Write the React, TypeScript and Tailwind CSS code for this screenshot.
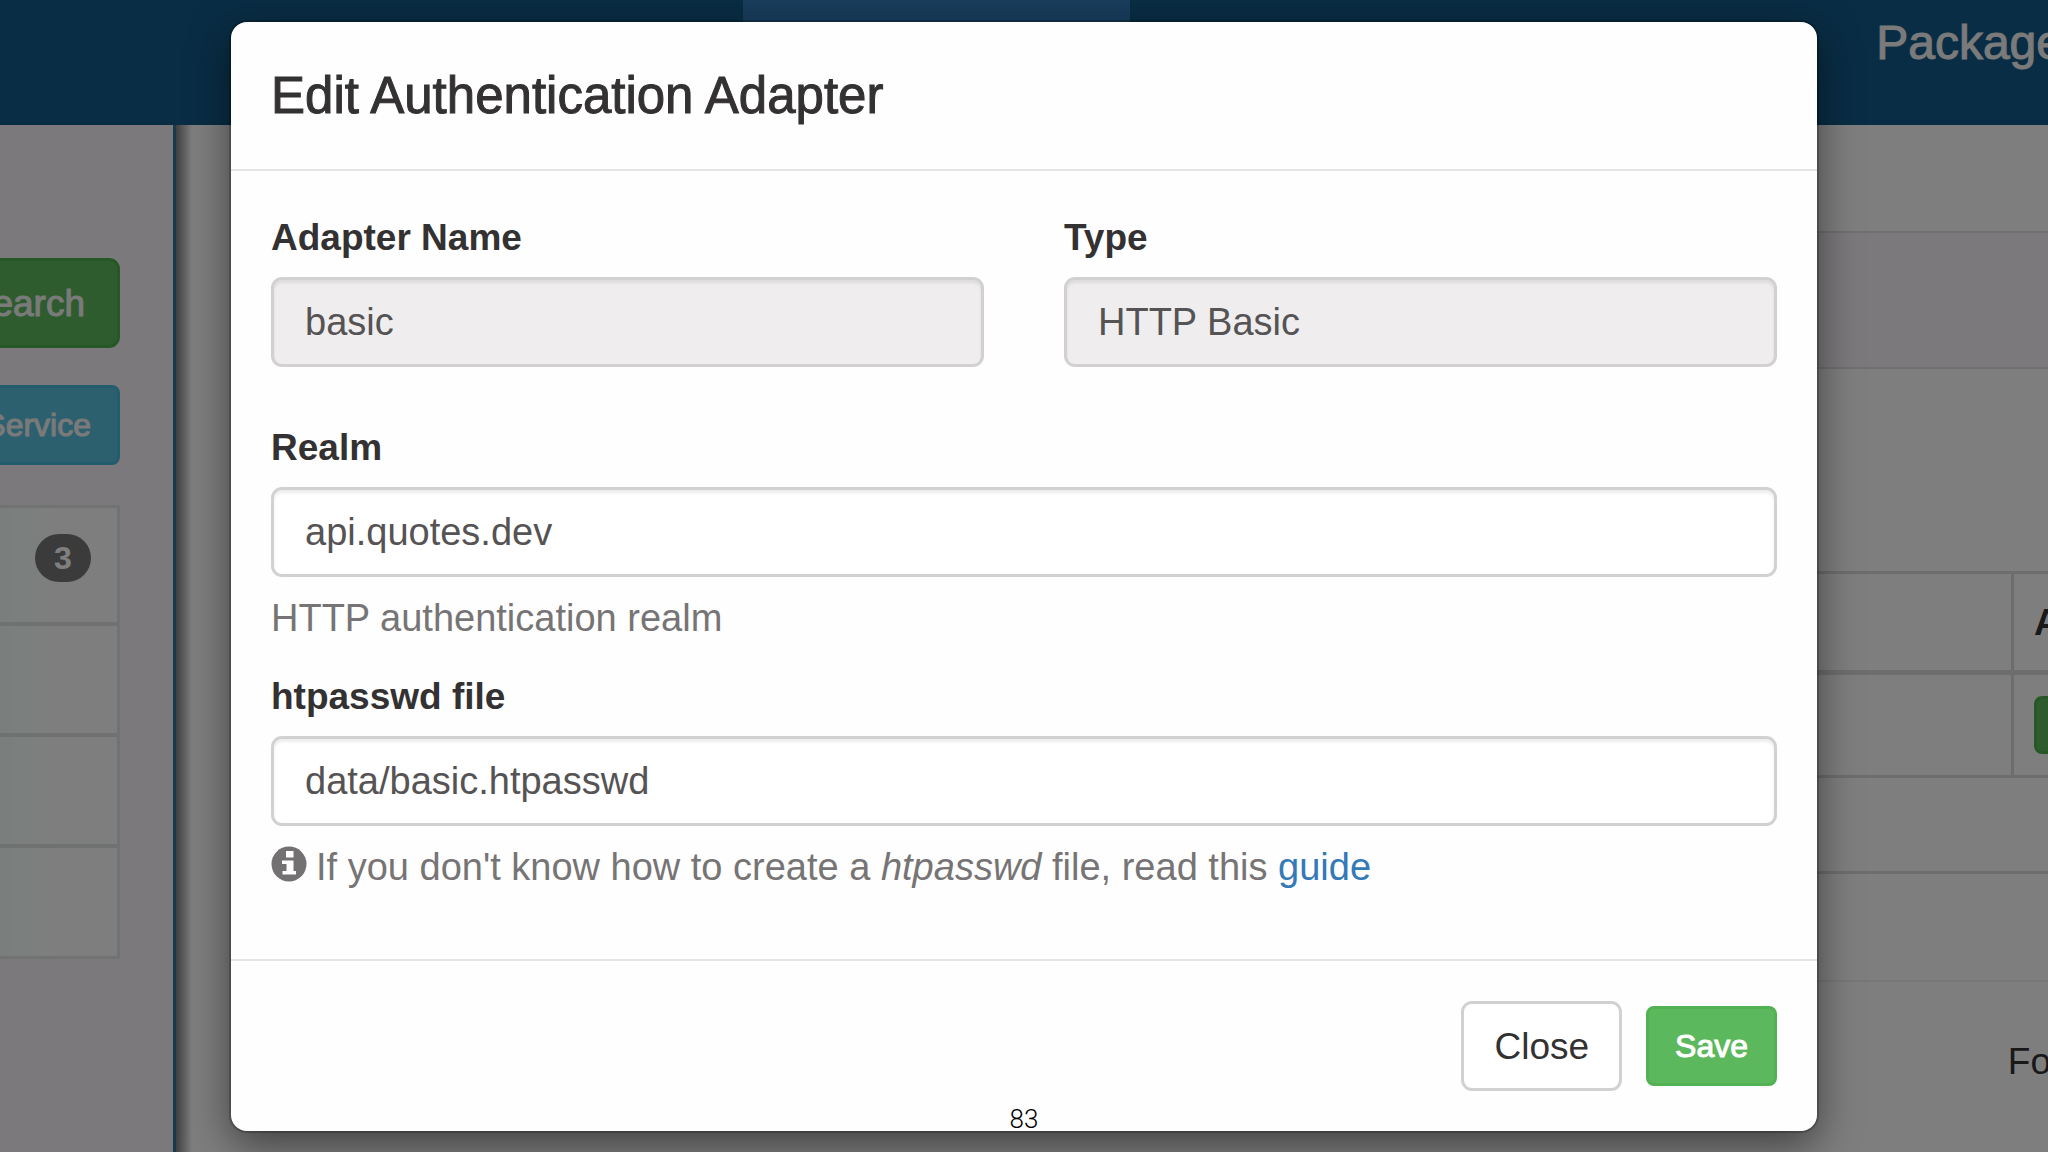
import type { InputHTMLAttributes, ReactNode } from 'react'

interface FieldProps extends InputHTMLAttributes<HTMLInputElement> {
  id: string
  label: string
  help?: ReactNode
}

const Field = ({ id, label, help, ...props }: FieldProps) => (
  <div className="flex flex-col">
    <label htmlFor={id} className="font-bold text-[#333132]">
      {label}
    </label>
    <input
      id={id}
      type="text"
      className="mt-[13px] h-[90px] w-full rounded-[11px] border-[3px] border-[#d2d0d1] bg-white px-[31px] text-[38px] text-[#555354] shadow-[inset_0_3px_3px_rgba(0,0,0,0.075)] outline-none read-only:bg-[#efedee]"
      {...props}
    />
    {help && <p className="mt-[15px] text-[38px] text-[#767475]">{help}</p>}
  </div>
)

const InfoIcon = () => (
  <svg
    viewBox="0 0 36 36"
    className="mr-[9px] inline-block size-9 align-[-2px]"
    aria-hidden="true"
  >
    <circle cx="18" cy="18" r="17.5" fill="#737172" />
    <path
      d="M15 5h7.5v6.500H15zM11 14.500h11.500V25H25v3.500H11.500V25h4V18H11z"
      fill="#fff"
    />
  </svg>
)

const Navbar = () => (
  <header className="flex h-[125px] bg-[#125a88] text-5xl text-[#f4f4f4]">
    <div className="w-[743px] shrink-0" />
    <div className="w-[387px] shrink-0 bg-[#307ab8]" />
    <a
      href="#package"
      className="ml-auto mr-[-15px] pt-[19px] [-webkit-text-stroke:1px_#f4f4f4]"
    >
      Package
    </a>
  </header>
)

const Sidebar = () => (
  <aside className="relative flex w-[176px] shrink-0 flex-col items-end overflow-hidden border-r-[3px] border-[#31729a] bg-[#f8f3f8] pr-[53px] pt-[133px]">
    <button
      type="button"
      className="h-[90px] shrink-0 rounded-[11px] border-[3px] border-[#4cae4c] bg-[#5cb85c] px-8 text-[#f4f4f4] [-webkit-text-stroke:1px_#f4f4f4]"
    >
      Search
    </button>
    <button
      type="button"
      className="mt-[37px] h-20 shrink-0 rounded-[8px] border-[3px] border-[#46b8da] bg-[#5bc0de] px-[26px] text-[32px] text-[#f4f4f4] [-webkit-text-stroke:1px_#f4f4f4]"
    >
      Service
    </button>
    <ul className="mt-10 w-[160px] border-[3px] border-b-0 border-[#e2e4e4] bg-gradient-to-r from-[#f5fffc] from-30% to-[#fdfdff] to-60%">
      <li className="flex h-[118px] items-start justify-end border-b-4 border-[#e0e2e2] pr-[26px] pt-[26px]">
        <span className="flex h-12 w-14 items-center justify-center rounded-full bg-[#777] text-[32px] font-bold text-white">
          3
        </span>
      </li>
      <li className="h-[111px] border-b-4 border-[#e0e2e2]" />
      <li className="h-[111px] border-b-4 border-[#e0e2e2]" />
      <li className="h-[111px] border-b-[3px] border-[#e2e4e4]" />
    </ul>
  </aside>
)

const Services = () => (
  <main className="min-w-0 flex-1 overflow-hidden bg-[#fffcff] pl-[60px]">
    <div className="h-[108px] border-b-2 border-[#e2dfe2]" />
    <div className="h-[136px] border-b-2 border-[#e2dfe2] bg-[#f6f2f6]" />
    <table className="mt-[202px] w-[calc(100%+160px)] table-fixed border-collapse border-[3px] border-[#dddadd]">
      <colgroup>
        <col />
        <col className="w-[194px]" />
      </colgroup>
      <thead>
        <tr className="h-[100px] border-b-[5px] border-[#dddadd]">
          <td />
          <th className="border-l-[3px] border-[#dddadd] pl-[20px] text-left">A</th>
        </tr>
      </thead>
      <tbody>
        <tr className="h-[104px]">
          <td />
          <td className="border-l-[3px] border-[#dddadd] pl-[20px]">
            <button
              type="button"
              aria-label="Edit"
              className="block h-[58px] w-[116px] rounded-[8px] border-[3px] border-[#4cae4c] bg-[#5cb85c]"
            />
          </td>
        </tr>
      </tbody>
    </table>
    <div className="h-[96px] border-b-[3px] border-[#dddadd]" />
    <div className="h-[108px] border-b-2 border-[#f0edf0]" />
    <footer className="flex justify-end pt-[53px]">
      <span className="mr-[-3px]">Fo</span>
    </footer>
  </main>
)

const EditAdapterDialog = () => (
  <form
    role="dialog"
    aria-labelledby="dialog-title"
    className="w-full max-w-[1586px] rounded-2xl bg-[#fefefe] shadow-[0_0_0_2px_rgba(0,0,0,0.2),0_13px_40px_rgba(0,0,0,0.5)]"
    onSubmit={(event) => event.preventDefault()}
  >
    <header className="border-b-2 border-[#e5e3e5] px-10 pb-[39px] pt-10">
      <h1
        id="dialog-title"
        className="text-[51px] leading-[68px] text-[#333132] [-webkit-text-stroke:1px_#333132]"
      >
        Edit Authentication Adapter
      </h1>
    </header>

    <div className="flex flex-col px-10 pb-[65px] pt-10">
      <div className="mb-[54px] grid grid-cols-2 gap-20">
        <Field id="name" label="Adapter Name" defaultValue="basic" readOnly />
        <Field id="type" label="Type" defaultValue="HTTP Basic" readOnly />
      </div>
      <div className="flex flex-col gap-[25px]">
        <Field
          id="realm"
          label="Realm"
          defaultValue="api.quotes.dev"
          help="HTTP authentication realm"
        />
        <Field
          id="htpasswd"
          label="htpasswd file"
          defaultValue="data/basic.htpasswd"
          help={
            <>
              <InfoIcon />
              If you don't know how to create a <em>htpasswd</em> file, read this{' '}
              <a href="#guide" className="text-[#337ab7]">
                guide
              </a>
            </>
          }
        />
      </div>
    </div>

    <footer className="flex items-center justify-end gap-6 border-t-2 border-[#e5e3e5] p-10">
      <button
        type="button"
        className="h-[90px] rounded-[11px] border-[3px] border-[#d2d0d1] bg-white px-[30px] text-[#333132]"
      >
        Close
      </button>
      <button
        type="submit"
        className="h-20 rounded-[8px] border-[3px] border-[#52b152] bg-[#5cb85c] px-[26px] text-[32px] text-white [-webkit-text-stroke:1px_#fff]"
      >
        Save
      </button>
    </footer>
  </form>
)

export default function App() {
  return (
    <div className="relative flex h-screen flex-col overflow-hidden font-['Liberation_Sans',Arial,sans-serif] text-[37px] leading-[53px] text-[#333]">
      <Navbar />
      <div className="flex min-h-0 flex-1">
        <Sidebar />
        <div className="z-10 -mr-4 w-4 shrink-0 bg-gradient-to-r from-black/50 to-transparent" />
        <Services />
      </div>

      <div className="absolute inset-0 z-20 flex items-start justify-center bg-black/50 pt-[22px]">
        <EditAdapterDialog />
      </div>
      <p className="absolute inset-x-0 bottom-[17px] z-30 text-center font-['Roboto',sans-serif] text-[26px] leading-8 font-light text-black">
        83
      </p>
    </div>
  )
}
